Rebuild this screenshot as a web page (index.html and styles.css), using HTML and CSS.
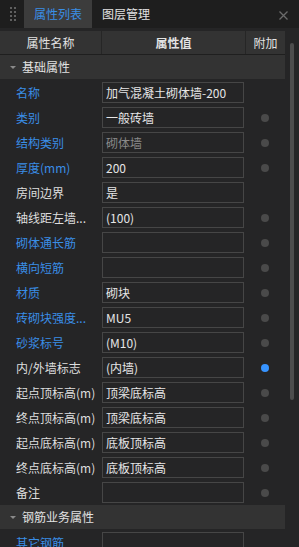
FILE: index.html
```html
<!DOCTYPE html>
<html lang="zh-CN">
<head>
    <meta charset="UTF-8">
    <title>属性列表</title>
    <link rel="stylesheet" href="styles.css">
</head>
<body>

<div class="tabBar">
    <div class="grip">
        <svg width="6" height="14" viewBox="0 0 6 14">
            <rect x="0" y="0" width="2" height="2"/><rect x="4" y="0" width="2" height="2"/>
            <rect x="0" y="4" width="2" height="2"/><rect x="4" y="4" width="2" height="2"/>
            <rect x="0" y="8" width="2" height="2"/><rect x="4" y="8" width="2" height="2"/>
            <rect x="0" y="12" width="2" height="2"/><rect x="4" y="12" width="2" height="2"/>
        </svg>
    </div>
    <div class="tab active">属性列表</div>
    <div class="tab">图层管理</div>
    <div class="closeButton">
        <svg width="9" height="9" viewBox="0 0 9 9"><path d="M0.5 0.5 L8.5 8.5 M8.5 0.5 L0.5 8.5"/></svg>
    </div>
</div>

<div class="main">
    <div class="propTable">
        <div class="headRow">
            <div class="headCell">属性名称</div>
            <div class="headCell bold">属性值</div>
            <div class="headCell">附加</div>
        </div>

        <div class="groupRow"><span class="arrow"></span>基础属性</div>

        <div class="propRow">
            <div class="label blue">名称</div>
            <div class="valueBox">加气混凝土砌体墙-200</div>
            <div class="extra"></div>
        </div>
        <div class="propRow">
            <div class="label blue">类别</div>
            <div class="valueBox">一般砖墙</div>
            <div class="extra"><span class="dot"></span></div>
        </div>
        <div class="propRow">
            <div class="label blue">结构类别</div>
            <div class="valueBox disabled">砌体墙</div>
            <div class="extra"><span class="dot"></span></div>
        </div>
        <div class="propRow">
            <div class="label blue">厚度(mm)</div>
            <div class="valueBox">200</div>
            <div class="extra"><span class="dot"></span></div>
        </div>
        <div class="propRow">
            <div class="label">房间边界</div>
            <div class="valueBox">是</div>
            <div class="extra"></div>
        </div>
        <div class="propRow">
            <div class="label">轴线距左墙...</div>
            <div class="valueBox">(100)</div>
            <div class="extra"><span class="dot"></span></div>
        </div>
        <div class="propRow">
            <div class="label blue">砌体通长筋</div>
            <div class="valueBox"></div>
            <div class="extra"><span class="dot"></span></div>
        </div>
        <div class="propRow">
            <div class="label blue">横向短筋</div>
            <div class="valueBox"></div>
            <div class="extra"><span class="dot"></span></div>
        </div>
        <div class="propRow">
            <div class="label blue">材质</div>
            <div class="valueBox">砌块</div>
            <div class="extra"><span class="dot"></span></div>
        </div>
        <div class="propRow">
            <div class="label blue">砖砌块强度...</div>
            <div class="valueBox">MU5</div>
            <div class="extra"><span class="dot"></span></div>
        </div>
        <div class="propRow">
            <div class="label blue">砂浆标号</div>
            <div class="valueBox">(M10)</div>
            <div class="extra"><span class="dot"></span></div>
        </div>
        <div class="propRow">
            <div class="label">内/外墙标志</div>
            <div class="valueBox">(内墙)</div>
            <div class="extra"><span class="dot on"></span></div>
        </div>
        <div class="propRow">
            <div class="label">起点顶标高(m)</div>
            <div class="valueBox">顶梁底标高</div>
            <div class="extra"><span class="dot"></span></div>
        </div>
        <div class="propRow">
            <div class="label">终点顶标高(m)</div>
            <div class="valueBox">顶梁底标高</div>
            <div class="extra"><span class="dot"></span></div>
        </div>
        <div class="propRow">
            <div class="label">起点底标高(m)</div>
            <div class="valueBox">底板顶标高</div>
            <div class="extra"><span class="dot"></span></div>
        </div>
        <div class="propRow">
            <div class="label">终点底标高(m)</div>
            <div class="valueBox">底板顶标高</div>
            <div class="extra"><span class="dot"></span></div>
        </div>
        <div class="propRow">
            <div class="label">备注</div>
            <div class="valueBox"></div>
            <div class="extra"><span class="dot"></span></div>
        </div>

        <div class="groupRow"><span class="arrow"></span>钢筋业务属性</div>

        <div class="propRow">
            <div class="label blue">其它钢筋</div>
            <div class="valueBox"></div>
            <div class="extra"></div>
        </div>
    </div>

    <div class="scrollBar">
        <div class="thumb"></div>
    </div>
</div>

</body>
</html>
```

FILE: styles.css
```css
html, body {
    margin: 0;
    padding: 0;
}
body {
    width: 299px;
    height: 547px;
    overflow: hidden;
    background-color: #252526;
    color: #dedede;
    font-family: "Noto Sans CJK SC", "Noto Sans", sans-serif;
    font-size: 12px;
}

/* верхняя панель с вкладками */
.tabBar {
    display: flex;
    height: 28px;
    background-color: #1e1e1e;
}
.grip {
    width: 24px;
    display: flex;
    align-items: center;
    justify-content: center;
    padding-left: 2px;
    box-sizing: border-box;
}
.grip svg {
    fill: #5f5f5f;
}
.tab {
    padding: 0 10px;
    line-height: 28px;
    color: #e2e2e2;
    cursor: pointer;
}
.tab.active {
    background-color: #3c3c3c;
    color: #3a8ee6;
}
.closeButton {
    margin-left: auto;
    padding-right: 11px;
    padding-top: 2px;
    display: flex;
    align-items: center;
}
.closeButton svg {
    stroke: #6b6b6b;
    stroke-width: 1.3;
}

.main {
    display: flex;
    margin-top: 3px;
}
.propTable {
    width: 285px;
}

/* шапка таблицы */
.headRow {
    display: grid;
    grid-template-columns: 101px 144px 40px;
    height: 23px;
    background-color: #333333;
    border-bottom: 1px solid #1f1f1f;
}
.headCell {
    line-height: 23px;
    text-align: center;
    color: #e2e2e2;
}
.headCell + .headCell {
    border-left: 1px solid #262626;
}
.bold {
    font-weight: bold;
}

/* заголовок группы */
.groupRow {
    height: 24px;
    line-height: 24px;
    margin-bottom: 1px;
    padding-left: 10px;
    background-color: #333333;
    color: #e2e2e2;
    display: flex;
    align-items: center;
}
.arrow {
    width: 0;
    height: 0;
    border-left: 3px solid transparent;
    border-right: 3px solid transparent;
    border-top: 3px solid #8a8a8a;
    margin-right: 6px;
}

/* строки свойств */
.propRow {
    display: grid;
    grid-template-columns: 101px 144px 40px;
    height: 25px;
    align-items: center;
}
.label {
    padding-left: 16px;
    white-space: nowrap;
    overflow: hidden;
}
.blue {
    color: #3a8ee6;
}
.valueBox {
    margin-left: 1px;
    width: 142px;
    height: 21px;
    box-sizing: border-box;
    border: 1px solid #464646;
    padding-left: 3px;
    line-height: 19px;
    color: #e6e6e6;
    white-space: nowrap;
}
.disabled {
    color: #8a8a8a;
}
.extra {
    display: flex;
    justify-content: center;
}
.dot {
    width: 8px;
    height: 8px;
    border-radius: 50%;
    background-color: #4a4a4a;
}
.dot.on {
    background-color: #3794ff;
}

/* полоса прокрутки */
.scrollBar {
    width: 14px;
}
.thumb {
    width: 4px;
    height: 357px;
    margin-top: 12px;
    margin-left: 5px;
    background-color: #4d4d4d;
    border-radius: 2px;
}
```
